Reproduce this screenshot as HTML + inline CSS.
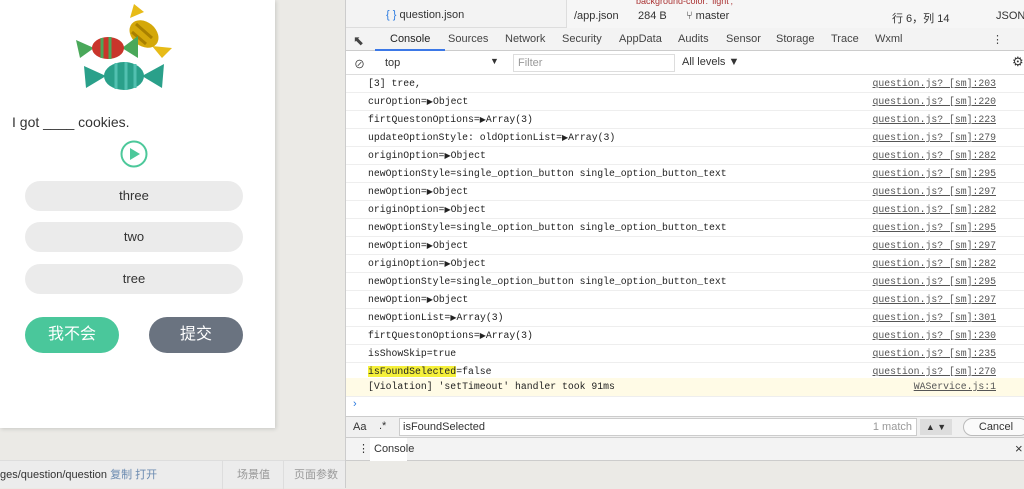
<!DOCTYPE html>
<html><head><meta charset="utf-8"><style>
*{margin:0;padding:0;box-sizing:border-box}
body{width:1024px;height:488px;overflow:hidden;background:#ebeae6;font-family:"Liberation Sans","Noto Sans CJK SC",sans-serif;position:relative}
.a{position:absolute}
.phone{left:0;top:0;width:275px;height:428px;background:#fff;box-shadow:1px 1px 4px rgba(0,0,0,.15)}
.opt{left:25px;width:218px;height:30px;border-radius:15px;background:#ebebeb;text-align:center;line-height:30px;font-size:13px;color:#333}
.btn{top:317px;width:94px;height:36px;border-radius:18px;color:#fff;text-align:center;line-height:36px;font-size:16px}
.mono{font-family:"Liberation Mono",monospace;font-size:9.8px;color:#222}
.ln{left:346px;width:678px;height:18px;border-bottom:1px solid #eee;background:#fff}
.ln span.l{position:absolute;left:22px;top:3px}
.ln span.r{position:absolute;right:28px;top:3px;text-decoration:underline;color:#555}
.t{font-size:8px}
.tab{position:absolute;top:33px;font-size:11px;color:#444}
</style></head><body>
<div class="a phone">
<svg class="a" style="left:72px;top:4px" width="124" height="94" viewBox="0 0 124 94">
<path d="M58 14 L62 0 L72 8Z" fill="#e7bb18"/><path d="M80 42 L100 44 L90 54Z" fill="#e7bb18"/>
<ellipse cx="72" cy="30" rx="16" ry="12" fill="#d4a80a" transform="rotate(40 72 30)"/>
<path d="M64 20 l16 14 M60 28 l14 12" stroke="#a88000" stroke-width="3"/>
<path d="M22 44 L4 36 L8 54Z" fill="#4aa85a"/><path d="M50 44 L66 32 L66 54Z" fill="#4aa85a"/>
<ellipse cx="36" cy="44" rx="16" ry="11" fill="#c9352b"/>
<path d="M30 34 v20 M38 33 v22" stroke="#4aa85a" stroke-width="3"/>
<path d="M34 72 L12 62 L14 84Z" fill="#2aa08a"/><path d="M70 72 L92 60 L90 84Z" fill="#2aa08a"/>
<ellipse cx="52" cy="72" rx="20" ry="14" fill="#2aa08a"/>
<path d="M44 59 v26 M54 58 v28 M63 60 v24" stroke="#52c0b0" stroke-width="3"/>
</svg>
<div class="a" style="left:12px;top:114px;font-size:14px;color:#333">I got ____ cookies.</div>
<svg class="a" style="left:120px;top:140px" width="28" height="28"><circle cx="14" cy="14" r="12.5" fill="none" stroke="#4cc89a" stroke-width="2"/><path d="M10 8 L20 14 L10 20Z" fill="#4cc89a"/></svg>
<div class="a opt" style="top:181px">three</div>
<div class="a opt" style="top:222px">two</div>
<div class="a opt" style="top:264px">tree</div>
<div class="a btn" style="left:25px;background:#4ac79b">我不会</div>
<div class="a btn" style="left:149px;background:#6a7380">提交</div>
</div>
<div class="a" style="left:0;top:460px;width:346px;height:28px;background:#ececec;border-top:1px solid #ddd;font-size:11px;line-height:28px">
<span class="a" style="left:0;color:#333">ges/question/question <span style="color:#6a8ab0">复制 打开</span></span>
<span class="a" style="left:222px;height:28px;border-left:1px solid #ddd;padding-left:14px;color:#999">场景值</span>
<span class="a" style="left:283px;height:28px;border-left:1px solid #ddd;padding-left:10px;color:#999">页面参数</span>
</div>
<div class="a" style="left:345px;top:0;width:1px;height:488px;background:#ccc"></div>
<div class="a" style="left:346px;top:0;width:678px;height:28px;background:#f3f3f3;border-bottom:1px solid #ddd;font-size:11px;color:#333">
<div class="a" style="left:220px;top:0;width:458px;height:28px;background:#f6f6f6;border-left:1px solid #ddd"></div>
<div class="a" style="left:290px;top:-4px;font-size:9px;color:#a33">background-color: 'light';</div>
<span class="a" style="left:40px;top:9px"><span style="color:#2a7ae0">{ }</span> question.json</span>
<span class="a" style="left:228px;top:10px">/app.json</span><span class="a" style="left:292px;top:10px">284 B</span><span class="a" style="left:340px;top:10px">&#x2442; master</span>
<span class="a" style="left:546px;top:10px">行 6，列 14</span><span class="a" style="left:650px;top:10px">JSON</span>
</div>
<div class="a" style="left:346px;top:28px;width:678px;height:23px;background:#f3f3f3;border-bottom:1px solid #ccc"></div>
<span class="tab" style="left:353px;font-size:13px">&#x2B09;</span>
<span class="tab" style="left:390px;color:#222">Console</span><div class="a" style="left:375px;top:49px;width:70px;height:2px;background:#3b78e7"></div>
<span class="tab" style="left:448px">Sources</span><span class="tab" style="left:505px">Network</span><span class="tab" style="left:562px">Security</span><span class="tab" style="left:619px">AppData</span><span class="tab" style="left:678px">Audits</span><span class="tab" style="left:726px">Sensor</span><span class="tab" style="left:776px">Storage</span><span class="tab" style="left:831px">Trace</span><span class="tab" style="left:875px">Wxml</span><span class="tab" style="left:992px">⋮</span>
<div class="a" style="left:346px;top:51px;width:678px;height:24px;background:#fff;border-bottom:1px solid #ddd;font-size:11px;color:#333">
<span class="a" style="left:8px;top:5px">⊘</span><span class="a" style="left:39px;top:6px">top</span><span class="a" style="left:144px;top:5px;font-size:9px">▼</span>
<div class="a" style="left:167px;top:3px;width:162px;height:18px;border:1px solid #ddd;color:#999;padding:2px 4px">Filter</div>
<span class="a" style="left:336px;top:5px">All levels ▼</span><span class="a" style="left:666px;top:3px;font-size:13px">⚙</span>
</div>
<div class="a ln mono" style="top:75px"><span class="l">[3] tree,</span><span class="r">question.js? [sm]:203</span></div>
<div class="a ln mono" style="top:93px"><span class="l">curOption=<span class="t">▶</span>Object</span><span class="r">question.js? [sm]:220</span></div>
<div class="a ln mono" style="top:111px"><span class="l">firtQuestonOptions=<span class="t">▶</span>Array(3)</span><span class="r">question.js? [sm]:223</span></div>
<div class="a ln mono" style="top:129px"><span class="l">updateOptionStyle: oldOptionList=<span class="t">▶</span>Array(3)</span><span class="r">question.js? [sm]:279</span></div>
<div class="a ln mono" style="top:147px"><span class="l">originOption=<span class="t">▶</span>Object</span><span class="r">question.js? [sm]:282</span></div>
<div class="a ln mono" style="top:165px"><span class="l">newOptionStyle=single_option_button single_option_button_text</span><span class="r">question.js? [sm]:295</span></div>
<div class="a ln mono" style="top:183px"><span class="l">newOption=<span class="t">▶</span>Object</span><span class="r">question.js? [sm]:297</span></div>
<div class="a ln mono" style="top:201px"><span class="l">originOption=<span class="t">▶</span>Object</span><span class="r">question.js? [sm]:282</span></div>
<div class="a ln mono" style="top:219px"><span class="l">newOptionStyle=single_option_button single_option_button_text</span><span class="r">question.js? [sm]:295</span></div>
<div class="a ln mono" style="top:237px"><span class="l">newOption=<span class="t">▶</span>Object</span><span class="r">question.js? [sm]:297</span></div>
<div class="a ln mono" style="top:255px"><span class="l">originOption=<span class="t">▶</span>Object</span><span class="r">question.js? [sm]:282</span></div>
<div class="a ln mono" style="top:273px"><span class="l">newOptionStyle=single_option_button single_option_button_text</span><span class="r">question.js? [sm]:295</span></div>
<div class="a ln mono" style="top:291px"><span class="l">newOption=<span class="t">▶</span>Object</span><span class="r">question.js? [sm]:297</span></div>
<div class="a ln mono" style="top:309px"><span class="l">newOptionList=<span class="t">▶</span>Array(3)</span><span class="r">question.js? [sm]:301</span></div>
<div class="a ln mono" style="top:327px"><span class="l">firtQuestonOptions=<span class="t">▶</span>Array(3)</span><span class="r">question.js? [sm]:230</span></div>
<div class="a ln mono" style="top:345px"><span class="l">isShowSkip=true</span><span class="r">question.js? [sm]:235</span></div>
<div class="a ln mono" style="top:363px"><span class="l"><span style="background:#f5f03a">isFoundSelected</span>=false</span><span class="r">question.js? [sm]:270</span></div>
<div class="a ln mono" style="top:378px;height:19px;background:#fffbe6"><span class="l">[Violation] 'setTimeout' handler took 91ms</span><span class="r">WAService.js:1</span></div>
<div class="a" style="left:346px;top:397px;width:678px;height:19px;background:#fff;color:#2a7ae0;font-size:11px;padding:1px 7px">›</div>
<div class="a" style="left:346px;top:416px;width:678px;height:21px;background:#f0f0f0;border-top:1px solid #ccc;font-size:11px;color:#333">
<span class="a" style="left:7px;top:4px">Aa</span><span class="a" style="left:33px;top:3px">.*</span>
<div class="a" style="left:53px;top:1px;width:518px;height:18px;background:#fff;border:1px solid #ccc;padding:2px 3px">isFoundSelected<span style="position:absolute;right:4px;color:#999">1 match</span></div>
<div class="a" style="left:574px;top:2px;width:32px;height:16px;background:#ddd;font-size:9px;text-align:center;line-height:16px">▲ ▼</div>
<div class="a" style="left:617px;top:1px;width:66px;height:18px;border:1px solid #bbb;border-radius:9px;background:#fafafa;text-align:center;line-height:16px">Cancel</div>
</div>
<div class="a" style="left:346px;top:437px;width:678px;height:24px;background:#f3f3f3;border-top:1px solid #ccc;border-bottom:1px solid #ccc;font-size:11px;color:#333">
<span class="a" style="left:12px;top:4px">⋮</span><div class="a" style="left:24px;top:0;width:37px;height:23px;background:#fff;padding:5px 4px">Console</div><span class="a" style="left:669px;top:3px;font-size:13px">×</span>
</div>
</body></html>
